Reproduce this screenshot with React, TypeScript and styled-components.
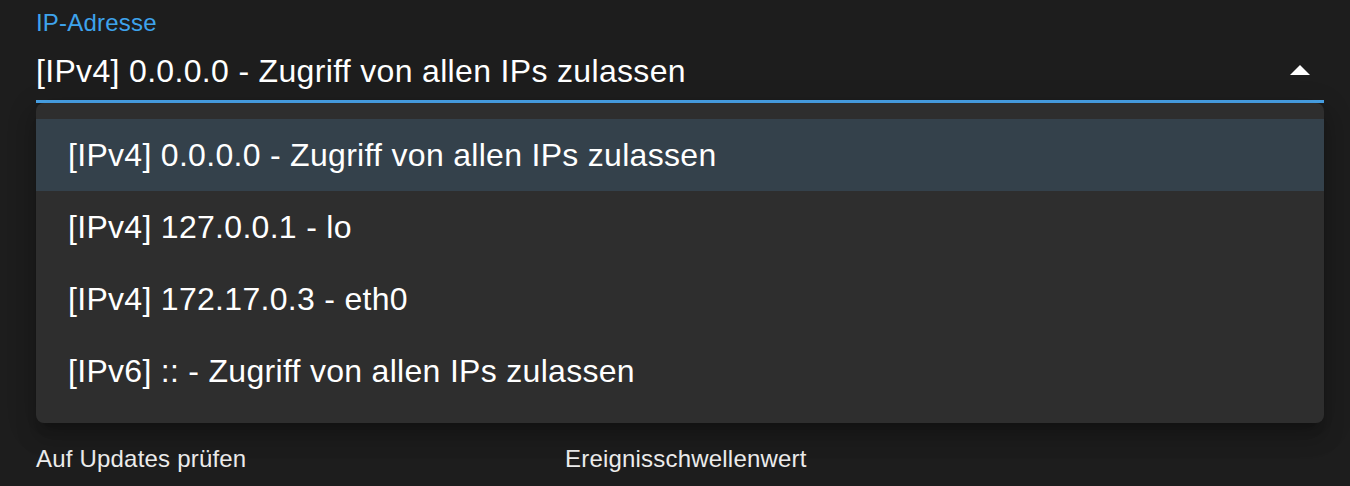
import React from "react";
import styled, { createGlobalStyle } from "styled-components";

const Global = createGlobalStyle`
  html, body { margin: 0; padding: 0; background: #1d1d1d; }
  body { font-family: "Liberation Sans", Arial, Helvetica, sans-serif; }
  * { box-sizing: border-box; }
`;

const Page = styled.div`
  width: 1350px;
  height: 486px;
  overflow: hidden;
  padding: 11px 26px 0 36px;
  background: #1d1d1d;
`;

const Field = styled.div`
  position: relative;
  display: flex;
  flex-direction: column;
`;

const Label = styled.label`
  font-size: 24px;
  line-height: 24px;
  letter-spacing: 0.2px;
  color: #3ea3ec;
`;

const ValueRow = styled.div`
  margin-top: 20px;
  display: flex;
  align-items: center;
  justify-content: space-between;
  padding-bottom: 13px;
  border-bottom: 3px solid #49a3e8;
`;

const Value = styled.span`
  font-size: 32px;
  line-height: 32px;
  letter-spacing: 0.33px;
  color: #ffffff;
`;

const Arrow = styled.svg`
  width: 48px;
  height: 48px;
  margin: -8px 0;
  fill: #ffffff;
  flex-shrink: 0;
`;

const Menu = styled.ul`
  position: absolute;
  top: 92px;
  left: 0;
  right: 0;
  margin: 0;
  padding: 16px 0;
  list-style: none;
  background: #2e2e2e;
  border-radius: 8px;
  box-shadow: 0 10px 10px -6px rgba(0, 0, 0, 0.2),
    0 16px 20px 2px rgba(0, 0, 0, 0.14), 0 6px 28px 4px rgba(0, 0, 0, 0.12);
  z-index: 10;
`;

const Item = styled.li<{ $selected?: boolean }>`
  padding: 18px 32px;
  font-size: 32px;
  line-height: 36px;
  letter-spacing: 0.3px;
  color: #ffffff;
  background: ${(p) => (p.$selected ? "#34414b" : "transparent")};
  white-space: nowrap;
`;

const Row = styled.div`
  margin-top: 344px;
  display: grid;
  grid-template-columns: 529px 1fr;
`;

const SmallLabel = styled.span`
  font-size: 24px;
  line-height: 24px;
  letter-spacing: 0.2px;
  color: #ececec;
`;

const options = [
  "[IPv4] 0.0.0.0 - Zugriff von allen IPs zulassen",
  "[IPv4] 127.0.0.1 - lo",
  "[IPv4] 172.17.0.3 - eth0",
  "[IPv6] :: - Zugriff von allen IPs zulassen",
];

export default function App() {
  return (
    <>
      <Global />
      <Page>
        <Field>
          <Label>IP-Adresse</Label>
          <ValueRow>
            <Value>{options[0]}</Value>
            <Arrow viewBox="0 0 24 24">
              <path d="m7 14 5-5 5 5z" />
            </Arrow>
          </ValueRow>
          <Menu>
            {options.map((o, i) => (
              <Item key={o} $selected={i === 0}>
                {o}
              </Item>
            ))}
          </Menu>
        </Field>
        <Row>
          <SmallLabel>Auf Updates prüfen</SmallLabel>
          <SmallLabel>Ereignisschwellenwert</SmallLabel>
        </Row>
      </Page>
    </>
  );
}
